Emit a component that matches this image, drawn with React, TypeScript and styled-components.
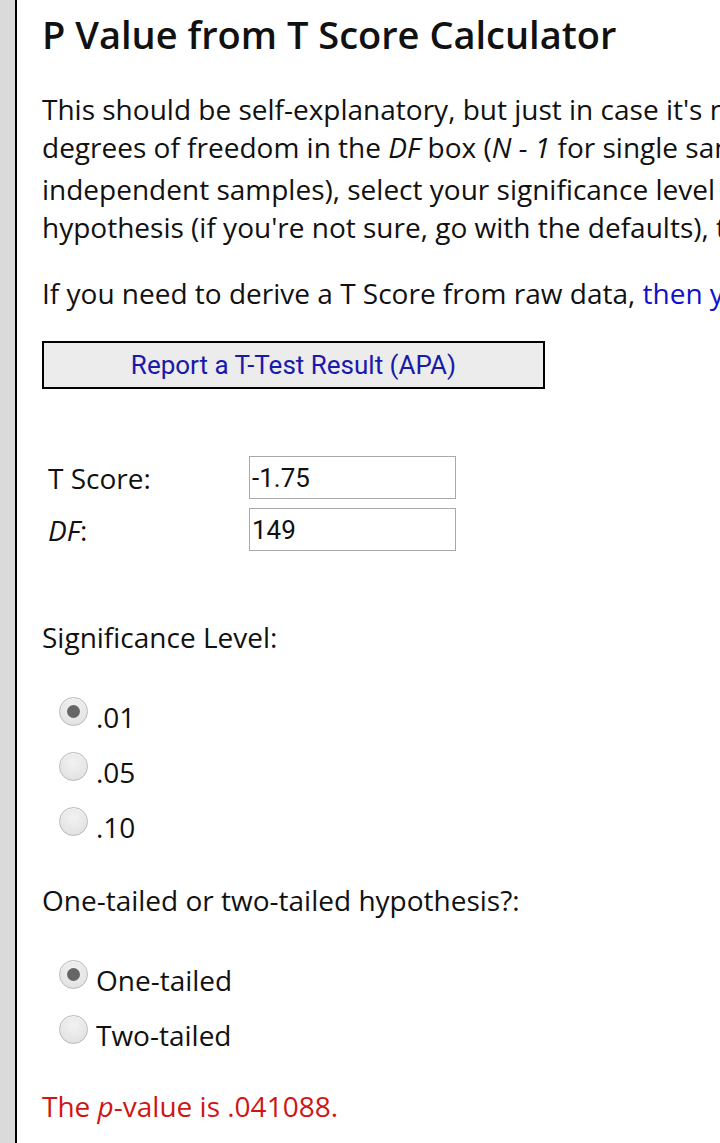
import styled, { createGlobalStyle } from 'styled-components';

const GlobalStyle = createGlobalStyle`
  html, body {
    margin: 0;
    padding: 0;
    background: #fff;
    overflow: hidden;
  }
  body {
    font-family: 'Open Sans', 'Liberation Sans', sans-serif;
    color: #111;
  }
`;

const levels = ['.01', '.05', '.10'];
const tails = ['One-tailed', 'Two-tailed'];

const App = () => {
  return (
    <Page>
      <GlobalStyle />
      <Sidebar />
      <Content>
        <Title>P Value from T Score Calculator</Title>
        <Intro>
          This should be self-explanatory, but just in case it's not: your t-score goes in the T Score box, you stick your
          <br />
          degrees of freedom in the <i>DF</i> box (<i>N - 1</i> for single sample and dependent pairs, (<i>N</i>
          <sub>1</sub> - 1) + (<i>N</i>
          <sub>2</sub> - 1) for
          <br />
          independent samples), select your significance level and whether you're testing a one or two-tailed
          <br />
          hypothesis (if you're not sure, go with the defaults), then press the button.
        </Intro>
        <Intro>
          If you need to derive a T Score from raw data, <TextLink href="#">then you need our T-Test calculator.</TextLink>
        </Intro>
        <ReportButton type="button">Report a T-Test Result (APA)</ReportButton>

        <FieldGrid>
          <FieldLabel>T Score:</FieldLabel>
          <FieldInput defaultValue="-1.75" />
          <FieldLabel>
            <i>DF</i>:
          </FieldLabel>
          <FieldInput defaultValue="149" />
        </FieldGrid>

        <Question>Significance Level:</Question>
        <RadioList>
          {levels.map((l, i) => (
            <RadioRow key={l}>
              <Radio type="radio" name="sig" defaultChecked={i === 0} />
              {l}
            </RadioRow>
          ))}
        </RadioList>

        <Question>One-tailed or two-tailed hypothesis?:</Question>
        <RadioList>
          {tails.map((t, i) => (
            <RadioRow key={t}>
              <Radio type="radio" name="tail" defaultChecked={i === 0} />
              {t}
            </RadioRow>
          ))}
        </RadioList>

        <Result>
          The <i>p</i>-value is .041088.
        </Result>
      </Content>
    </Page>
  );
};

export default App;

const Page = styled.div`
  display: flex;
  min-height: 100vh;
  width: 720px;
  overflow: hidden;
`;

const Sidebar = styled.div`
  flex: 0 0 15px;
  background: #dadada;
  border-right: 2px solid #000;
`;

const Content = styled.div`
  flex: 0 0 auto;
  padding-left: 25px;
  padding-top: 8px;
  width: 1500px;
`;

const Title = styled.h1`
  margin: 0;
  font-size: 38px;
  font-weight: 600;
  line-height: 52px;
  color: #111;
`;

const Intro = styled.p`
  margin: 30px 0 0;
  font-size: 28px;
  line-height: 38px;
  white-space: nowrap;

  & + & {
    margin-top: 28px;
  }

  sub {
    font-size: 18px;
    line-height: 1;
    vertical-align: -10px;
  }
`;

const TextLink = styled.a`
  color: #1010cc;
  text-decoration: none;
`;

const ReportButton = styled.button`
  display: block;
  margin-top: 29px;
  width: 503px;
  height: 48px;
  border: 2px solid #000;
  background: #ececec;
  font-family: Roboto, 'Liberation Sans', sans-serif;
  font-size: 26px;
  color: #1a1aa8;
  padding: 0;
`;

const FieldGrid = styled.div`
  display: grid;
  grid-template-columns: 201px 207px;
  row-gap: 9px;
  margin-top: 67px;
  padding-left: 6px;
  align-items: center;
`;

const FieldLabel = styled.div`
  font-size: 28px;
`;

const FieldInput = styled.input`
  box-sizing: border-box;
  width: 207px;
  height: 43px;
  border: 1px solid #a9a9a9;
  padding: 0 2px;
  font-family: Roboto, 'Liberation Sans', sans-serif;
  font-size: 26px;
  color: #111;
  outline: none;
`;

const Question = styled.div`
  margin-top: 67px;
  font-size: 28px;
  line-height: 39px;

  & ~ & {
    margin-top: 35px;
  }
`;

const RadioList = styled.div`
  display: flex;
  flex-direction: column;
  gap: 16px;
  margin-top: 40px;
  padding-left: 17px;
`;

const RadioRow = styled.label`
  display: flex;
  align-items: center;
  height: 39px;
  font-size: 28px;
`;

const Radio = styled.input`
  appearance: none;
  box-sizing: border-box;
  width: 29px;
  height: 29px;
  margin: -11px 8px 0 0;
  border-radius: 50%;
  border: 1px solid #b8b8b8;
  background: radial-gradient(circle at 50% 35%, #f2f2f2 0%, #dedede 100%);
  box-shadow: inset 0 1px 1px rgba(255, 255, 255, 0.8);
  display: grid;
  place-items: center;

  &:checked::after {
    content: '';
    width: 13px;
    height: 13px;
    border-radius: 50%;
    background: #666;
  }
`;

const Result = styled.p`
  margin: 33px 0 0;
  font-size: 28px;
  line-height: 39px;
  color: #d01515;
`;
